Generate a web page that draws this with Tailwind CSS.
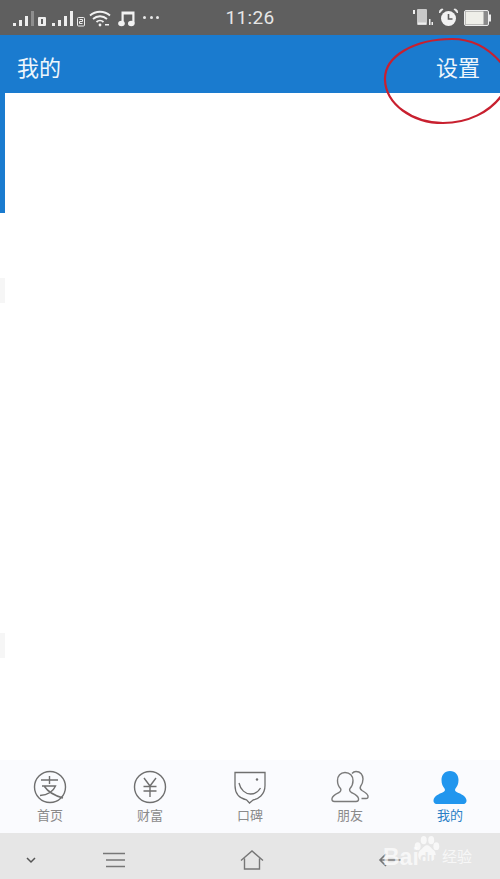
<!DOCTYPE html>
<html lang="zh-CN">
<head>
    <meta charset="UTF-8">
    <meta name="viewport" content="width=device-width, initial-scale=1.0">
    <title>我的</title>
    <script src="https://cdn.jsdelivr.net/npm/@tailwindcss/browser@4"></script>
</head>
<body class="bg-white font-['Roboto','Noto_Sans_CJK_SC',sans-serif] overflow-hidden">
<div class="relative w-[500px] h-[879px] flex flex-col overflow-hidden">

    <!-- Status bar -->
    <div class="h-[35px] bg-[#5f5f5f] flex items-center text-[#e8e8e8] relative">
        <div class="flex items-center pl-[13px] gap-[5px] w-[200px]">
            <svg width="36" height="18" viewBox="0 0 36 18" class="-ml-px">
                <g fill="#eeeeee">
                    <rect x="1" y="14" width="3" height="3"/><rect x="7" y="11" width="3" height="6"/><rect x="13" y="7" width="3" height="10"/>
                    <rect x="19" y="2" width="3" height="15" fill="#8e8e8e"/>
                    <rect x="26" y="8" width="8" height="9" rx="1"/>
                    <rect x="29" y="10" width="2" height="5" fill="#5f5f5f"/>
                </g>
            </svg>
            <svg width="36" height="18" viewBox="0 0 36 18" class="-ml-[2px]">
                <g fill="#eeeeee">
                    <rect x="1" y="14" width="3" height="3"/><rect x="7" y="11" width="3" height="6"/><rect x="13" y="7" width="3" height="10"/>
                    <rect x="19" y="2" width="3" height="15"/>
                    <rect x="26.5" y="8.5" width="7" height="8.5" rx="1" fill="none" stroke="#eeeeee"/>
                    <path d="M28.5 10.5h3v2h-3v2h3" fill="none" stroke="#eeeeee" stroke-width="1"/>
                </g>
            </svg>
            <svg width="22" height="18" viewBox="0 0 22 18" class="-ml-[3px]" fill="none" stroke="#f2f2f2" stroke-width="1.8">
                <path d="M1 6.5C6.5 1.5 15.5 1.500 21 6.500"/>
                <path d="M4 10C8 6.300 14 6.300 18 10"/>
                <path d="M7.500 13C9.500 11.200 12.500 11.200 14.500 13"/>
                <circle cx="11" cy="16" r="1.400" fill="#f2f2f2" stroke="none"/>
                <rect x="16" y="15" width="4" height="1.500" fill="#f2f2f2" stroke="none"/>
            </svg>
            <svg width="17" height="18" viewBox="0 0 17 18" class="ml-[2px]" fill="#f2f2f2">
                <path d="M3.500 2.500h13v12h-2.200V5.500H5.700v9h-2.200z"/>
                <ellipse cx="3.500" cy="14.500" rx="3.300" ry="2.700"/>
                <ellipse cx="13.300" cy="14.500" rx="3.300" ry="2.700"/>
            </svg>
            <div class="flex gap-[3.500px] ml-[3px]">
                <span class="w-[3px] h-[3px] rounded-full bg-[#e8e8e8]"></span>
                <span class="w-[3px] h-[3px] rounded-full bg-[#e8e8e8]"></span>
                <span class="w-[3px] h-[3px] rounded-full bg-[#e8e8e8]"></span>
            </div>
        </div>
        <div class="w-[100px] text-center text-[19px] leading-none tracking-[0.3px] text-[#e6e6e6]">11:26</div>
        <div class="flex-1 flex justify-end items-center pr-[9px] gap-[6px]">
            <svg width="21" height="19" viewBox="0 0 21 19">
                <rect x="1" y="2" width="2" height="4" fill="#f0f0f0"/>
                <rect x="5" y="1" width="10" height="16" rx="1" fill="#c9c9c9"/>
                <rect x="6" y="14.500" width="8" height="2" fill="#efefef"/>
                <rect x="17" y="11" width="1.500" height="6" fill="#f0f0f0"/>
                <rect x="19.500" y="14" width="1.500" height="3" fill="#f0f0f0"/>
            </svg>
            <svg width="19" height="19" viewBox="0 0 19 19">
                <circle cx="9.500" cy="10.500" r="7.500" fill="#f2f2f2"/>
                <path d="M9.500 6v5h4" fill="none" stroke="#5f5f5f" stroke-width="1.600"/>
                <path d="M0.500 5L4 1.200A3 3 0 0 0 0.500 5zM18.500 5L15 1.200A3 3 0 0 1 18.500 5z" fill="#f2f2f2" stroke="#f2f2f2"/>
            </svg>
            <svg width="27" height="16" viewBox="0 0 27 16">
                <rect x="0.500" y="0.500" width="24" height="15" rx="1.500" fill="#8a8a8a" stroke="#ededed"/>
                <rect x="1.500" y="1.500" width="18" height="13" fill="#efefe9"/>
                <rect x="25" y="4.500" width="2" height="7" fill="#ededed"/>
            </svg>
        </div>
    </div>

    <!-- Header -->
    <header class="h-[58px] bg-[#1a7bcf] flex items-center justify-between pl-[17px] pr-[20px] pt-[10px] text-[22px] leading-none">
        <span class="text-[#eef6fc]">我的</span>
        <span class="text-[#eef6fc]">设置</span>
    </header>

    <!-- Empty content with the remains of the page at the left edge -->
    <main class="flex-1 bg-white flex flex-col items-start">
        <div class="w-[5px] h-[120px] bg-[#1a7bcf]"></div>
        <div class="w-[5px] h-[25px] bg-[#f6f6f6] mt-[65px]"></div>
        <div class="w-[5px] h-[25px] bg-[#f6f6f6] mt-[330px]"></div>
    </main>

    <!-- Tab bar -->
    <nav class="h-[73px] bg-[#fafbfe] grid grid-cols-5 text-[13px] leading-none text-[#8a8a8a]">
        <div class="flex flex-col items-center pt-[10px]">
            <svg width="34" height="34" viewBox="0 0 34 34" fill="none" stroke="#6f6f6f" stroke-width="1.400">
                <circle cx="17" cy="17" r="15.500"/>
                <path d="M8 10h17M16.500 6v8" />
                <path d="M9 16h13.500C20 22 14 25 7 25.500M11.500 16.500C15 22 23 26 30 28"/>
            </svg>
            <span class="mt-[5px]">首页</span>
        </div>
        <div class="flex flex-col items-center pt-[10px]">
            <svg width="34" height="34" viewBox="0 0 34 34" fill="none" stroke="#6f6f6f" stroke-width="1.400">
                <circle cx="17" cy="17" r="15.500"/>
                <path d="M11 8l6 8 6-8M10.500 16.500h13M10.500 21h13M17 16v11"/>
            </svg>
            <span class="mt-[5px]">财富</span>
        </div>
        <div class="flex flex-col items-center pt-[10px]">
            <svg width="34" height="34" viewBox="0 0 34 34" fill="none" stroke="#6f6f6f" stroke-width="1.300">
                <path d="M2 2.500h30v13C32 25 25 29 20 30l-3.500 3-3-3.200C7 28.500 2 24 2 15.500z"/>
                <path d="M6 13c1.500 7 6.500 11 11.500 11 5 0 8-2.500 10-6"/>
                <circle cx="24" cy="9.500" r="1.200" fill="#6f6f6f" stroke="none"/>
            </svg>
            <span class="mt-[5px]">口碑</span>
        </div>
        <div class="flex flex-col items-center pt-[10px]">
            <svg width="38" height="34" viewBox="0 0 38 34" fill="none" stroke="#7a7a7a" stroke-width="1.400">
                <path d="M21 3.500c1-1.200 2.500-2 4-2 4.500 0 7 3.500 7 7.500 0 3-1 5.500-2.500 7.500-.8 1.500 0 3 1.500 4 2.500 1.500 5.500 3 6 5.500.2 1.500-.2 2.500-2 2.500h-4.500"/>
                <path d="M14 2.500c5 0 8 3.500 8 8 0 3.500-1.200 6.200-3 8-1 1.500 0 3.200 1.500 4 3 1.500 6.500 3 7 6 .3 2-.5 3-2.500 3H3.500c-2 0-2.800-1-2.500-3 .5-3 4-4.500 7-6 1.500-.8 2.500-2.500 1.500-4-1.800-1.800-3-4.500-3-8 0-4.500 3-8 7.500-8z"/>
            </svg>
            <span class="mt-[5px]">朋友</span>
        </div>
        <div class="flex flex-col items-center pt-[10px] text-[#2a7fc6]">
            <svg width="34" height="34" viewBox="0 0 34 34" fill="#2196ee">
                <path d="M17 1c5.500 0 8.500 4 8.500 9 0 3.800-1.300 6.500-3 8.500-1 1.500-.3 3 1.500 3.800 4 1.700 9 3.700 9.500 8 .2 2-1 3.700-3 3.700H3.500c-2 0-3.200-1.700-3-3.700.5-4.300 5.500-6.300 9.500-8 1.800-.8 2.500-2.300 1.500-3.800-1.700-2-3-4.700-3-8.500 0-5 3-9 8.500-9z"/>
            </svg>
            <span class="mt-[5px]">我的</span>
        </div>
    </nav>

    <!-- Phone navigation bar -->
    <div class="h-[46px] bg-[#e6e6e6] relative flex items-center pt-[8px] text-[#6f6f6f]">
        <div class="w-[62px] flex justify-center">
            <svg width="10" height="7" viewBox="0 0 10 7" fill="none" stroke="#555555" stroke-width="1.500"><path d="M1 1l4 4 4-4"/></svg>
        </div>
        <div class="w-[106px] flex justify-center -ml-px">
            <svg width="24" height="16" viewBox="0 0 24 16" fill="none" stroke="#777777" stroke-width="1.600"><path d="M1 1.500h22M4 8h19M4 14.500h19"/></svg>
        </div>
        <div class="w-[170px] flex justify-center">
            <svg width="24" height="20" viewBox="0 0 24 20" fill="none" stroke="#777777" stroke-width="1.400"><path d="M1 10.500L12 1l11 9.500M4.500 8.500v10.500h15V8.500"/></svg>
        </div>
        <div class="w-[104px] flex justify-center">
            <svg width="23" height="14" viewBox="0 0 23 14" fill="none" stroke="#777777" stroke-width="1.600"><path d="M8 1L2 7l6 6M2 7h21"/></svg>
        </div>

        <!-- Baidu jingyan watermark -->
        <div class="absolute left-[383px] top-[2px] w-[110px] h-[44px] text-white/70 font-['Liberation_Sans','Noto_Sans_CJK_SC',sans-serif]">
            <svg class="absolute left-[30px] top-0" width="28" height="28" viewBox="0 0 30 30" fill="#ffffff" fill-opacity="0.7">
                <ellipse cx="5" cy="12" rx="3.200" ry="4.200"/>
                <ellipse cx="11.500" cy="5.500" rx="3.200" ry="4.300"/>
                <ellipse cx="19.500" cy="5.500" rx="3.200" ry="4.300"/>
                <ellipse cx="25" cy="12" rx="3.200" ry="4.200"/>
                <path d="M15 11c3 0 4 3 7 5 4 3 3 12-3 12-3 0-5-.5-8 0-6 0-7-9-3-12 3-2 4-5 7-5z"/>
            </svg>
            <span class="absolute left-0 top-[11px] text-[23px] leading-none font-bold">Bai</span>
            <span class="absolute left-[37px] top-[16px] text-[14px] leading-none font-bold text-[#e6e6e6]">du</span>
            <span class="absolute left-[59px] top-[14px] text-[15px] leading-none">经验</span>
        </div>
    </div>

    <!-- Red hand-drawn ellipse -->
    <svg class="absolute left-[380px] top-[34px]" width="125" height="95" viewBox="0 0 125 95" fill="none" stroke="#c8202f" stroke-width="2.200">
        <path d="M122 30C108 13 92 5 72 5C35 5 4 22 5 46C6 70 32 89 63 89C88 89 110 78 122 61"/>
    </svg>
</div>
</body>
</html>
